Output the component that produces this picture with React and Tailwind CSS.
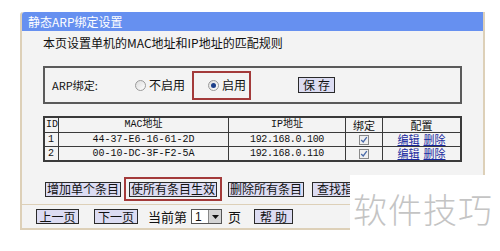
import React from "react";

const cjk = { fontFamily: '"SimSun","Noto Sans CJK SC","DejaVu Sans",sans-serif' };

function Btn({ children, className = "" }) {
  return (
    <div
      className={
        "flex items-center justify-center h-[15px] border border-[#2a2a2a] bg-[#dcdcf2] text-[12px] leading-none text-[#111] whitespace-nowrap overflow-hidden " +
        className
      }
      style={cjk}
    >
      {children}
    </div>
  );
}

function Radio({ checked }) {
  return (
    <div className="w-[11px] h-[11px] rounded-full border border-[#9a9a9a] bg-gradient-to-br from-[#dcdcdc] to-white flex items-center justify-center">
      {checked && <div className="w-[5px] h-[5px] rounded-full bg-[#1c3f8a]" />}
    </div>
  );
}

function Check() {
  return (
    <div className="w-[10px] h-[10px] border border-[#8a8a8a] bg-[#f0f0f0] flex items-center justify-center">
      <svg width="8" height="8" viewBox="0 0 8 8">
        <path d="M1.2 4 L3.2 6 L6.8 1.2" stroke="#4a6aa8" strokeWidth="1.3" fill="none" />
      </svg>
    </div>
  );
}

export default function App() {
  const rows = [
    ["1", "44-37-E6-16-61-2D", "192.168.0.100"],
    ["2", "00-10-DC-3F-F2-5A", "192.168.0.110"],
  ];
  return (
    <div className="relative w-[500px] h-[251px] bg-white overflow-hidden" style={cjk}>
      <div className="ml-[20px] mt-[12px] w-[465px] h-[218px] flex flex-col bg-[#f3f3f3] border-x-2 border-b-2 border-[#ddd0b8] rounded-tl-[3px]">
        <div className="h-[19px] bg-[#6690f0] text-white text-[12px] leading-[19px] pl-[6px] rounded-tl-[3px]">
          静态ARP绑定设置
        </div>
        <div className="pl-[21px] pr-[21px] flex flex-col">
          <div className="mt-[5px] text-[12px] leading-[14px] text-[#111]">本页设置单机的MAC地址和IP地址的匹配规则</div>
          <div className="mt-[16px] h-[38px] border-2 border-[#5a5a5a] flex items-center text-[12px] text-[#111]">
            <div className="ml-[7px] w-[83px] text-[11px]">ARP绑定:</div>
            <Radio />
            <div className="ml-[3px] w-[40px]">不启用</div>
            <div className="ml-[3px] w-[59px] h-[29px] border-2 border-[#a33a3a] flex items-center pl-[14px]">
              <Radio checked />
              <div className="ml-[3px]">启用</div>
            </div>
            <Btn className="ml-[47px] w-[37px] h-[16px] tracking-[3px] pl-[3px]">保存</Btn>
          </div>
          <div className="mt-[12px] border-2 border-[#3a3a3a] text-[10px] text-[#111]" style={{ fontFamily: '"Liberation Mono","Noto Sans CJK SC",monospace' }}>
            <div className="grid grid-cols-[14px_170px_117px_37px_1fr] h-[15px] border-b border-[#3a3a3a]">
              <div className="border-r border-[#3a3a3a] pl-[1px] leading-[14px]">ID</div>
              <div className="border-r border-[#3a3a3a] text-center leading-[14px]">MAC地址</div>
              <div className="border-r border-[#3a3a3a] text-center leading-[14px]">IP地址</div>
              <div className="border-r border-[#3a3a3a] text-center leading-[14px] text-[11px]" style={cjk}>绑定</div>
              <div className="text-center leading-[14px] text-[11px]" style={cjk}>配置</div>
            </div>
            {rows.map((r, i) => (
              <div
                key={r[0]}
                className={
                  "grid grid-cols-[14px_170px_117px_37px_1fr] " +
                  (i === 0 ? "h-[14px] border-b border-[#3a3a3a]" : "h-[13px]")
                }
              >
                <div className="border-r border-[#3a3a3a] pl-[3px] leading-[13px]">{r[0]}</div>
                <div className="border-r border-[#3a3a3a] text-center leading-[13px]">{r[1]}</div>
                <div className="border-r border-[#3a3a3a] text-center leading-[13px] tracking-[-0.3px]">{r[2]}</div>
                <div className="border-r border-[#3a3a3a] flex items-center justify-center"><Check /></div>
                <div className="flex items-center justify-center gap-[4px] text-[11px] leading-[13px] text-[#1a2aa0] underline" style={cjk}>
                  <span>编辑</span>
                  <span>删除</span>
                </div>
              </div>
            ))}
          </div>
        </div>
        <div className="mt-[15px] h-[24px] flex items-center">
          <Btn className="w-[76px] ml-[23px]">增加单个条目</Btn>
          <div className="ml-[3px] w-[98px] h-[24px] border-2 border-[#a33a3a] flex items-center justify-center">
            <Btn className="w-[88px]">使所有条目生效</Btn>
          </div>
          <Btn className="ml-[6px] w-[76px]">删除所有条目</Btn>
          <Btn className="ml-[8px] w-[76px] justify-start pl-[4px]">查找指定条目</Btn>
        </div>
        <div className="h-[1px] bg-[#ddd0b8] mt-[3px]" />
        <div className="flex-1 flex items-center pl-[14px] text-[13px] text-[#111]">
          <Btn className="w-[43px] h-[14px]">上一页</Btn>
          <Btn className="ml-[15px] w-[44px] h-[14px]">下一页</Btn>
          <div className="ml-[10px]">当前第</div>
          <div className="ml-[4px] w-[31px] h-[15px] border border-[#555] bg-white flex items-center">
            <div className="flex-1 pl-[3px] text-[12px] leading-none" style={{ fontFamily: '"Liberation Sans",sans-serif' }}>1</div>
            <div className="w-[13px] h-[13px] bg-[#d4d4d4] border-l border-[#888] flex items-center justify-center">
              <svg width="7" height="4" viewBox="0 0 7 4"><path d="M0 0 L7 0 L3.5 4 Z" fill="#111" /></svg>
            </div>
          </div>
          <div className="ml-[6px]">页</div>
          <Btn className="ml-[13px] w-[39px] h-[14px] tracking-[3px] pl-[3px]">帮助</Btn>
        </div>
      </div>
      <div className="absolute left-[350px] top-[175px] right-0 bottom-0 bg-white flex items-start">
        <div
          className="mt-[15px] ml-[3px] text-[34px] leading-[38px] text-[#c4c4c4] tracking-[1px] font-light"
          style={{ fontFamily: '"Noto Sans CJK SC",sans-serif' }}
        >
          软件技巧
        </div>
      </div>
    </div>
  );
}
